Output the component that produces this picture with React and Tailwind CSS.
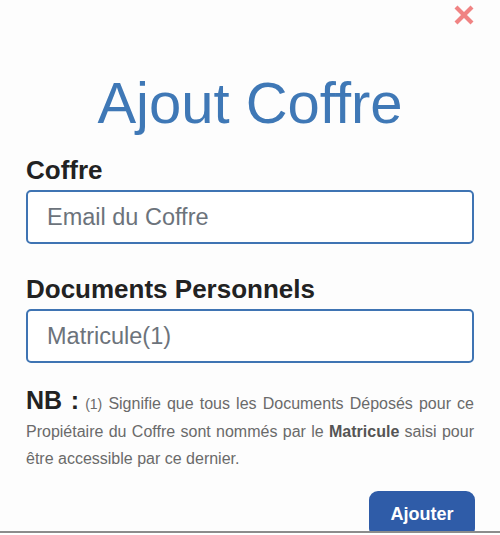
import React from 'react';

const CloseIcon = () => (
  <svg width="22" height="22" viewBox="0 0 22 22" fill="none">
    <path d="M3 3L19 19M19 3L3 19" stroke="#f08383" strokeWidth="4.2" strokeLinecap="butt"/>
  </svg>
);

const App = () => {
  return (
    <div className="w-[500px] h-[533px] overflow-hidden border-b-2 border-[#8c8c8c] bg-[#fdfdfd] px-[26px] font-['Liberation_Sans',Arial,sans-serif]">
      <div className="flex justify-end pt-[4px] -mr-[1px]">
        <button className="block"><CloseIcon/></button>
      </div>

      <h1 className="mt-[48px] text-center text-[58px] leading-none text-[#3f78b6]">Ajout Coffre</h1>

      <label className="block mt-[25px] text-[26px] leading-none font-bold text-[#222]">Coffre</label>
      <input
        className="mt-[7px] w-full h-[54px] rounded-[5px] border-2 border-[#3f74b3] bg-white px-[19px] text-[23.5px] text-[#333] placeholder:text-[#6c737b] outline-none"
        placeholder="Email du Coffre"
      />

      <label className="block mt-[32px] text-[26px] leading-none font-bold text-[#222]">Documents Personnels</label>
      <input
        className="mt-[7px] w-full h-[54px] rounded-[5px] border-2 border-[#3f74b3] bg-white px-[19px] text-[23.5px] text-[#333] placeholder:text-[#6c737b] outline-none"
        placeholder="Matricule(1)"
      />

      <p className="mt-[25px] text-justify text-[16px] leading-[27px] text-[#6a6a6a]">
        <span className="text-[25px] leading-none font-bold text-[#222]">NB :</span>{" "}
        <span className="text-[14px]">(1)</span> Signifie que tous les Documents Déposés pour ce Propiétaire du Coffre sont nommés par le <b className="text-[#555]">Matricule</b> saisi pour être accessible par ce dernier.
      </p>

      <div className="flex justify-end mt-[19px]">
        <button className="h-[46px] w-[106px] -mr-[1px] rounded-[9px] bg-[#2f5ca8] text-[18px] font-bold text-white">
          Ajouter
        </button>
      </div>
    </div>
  );
};

export default App;
